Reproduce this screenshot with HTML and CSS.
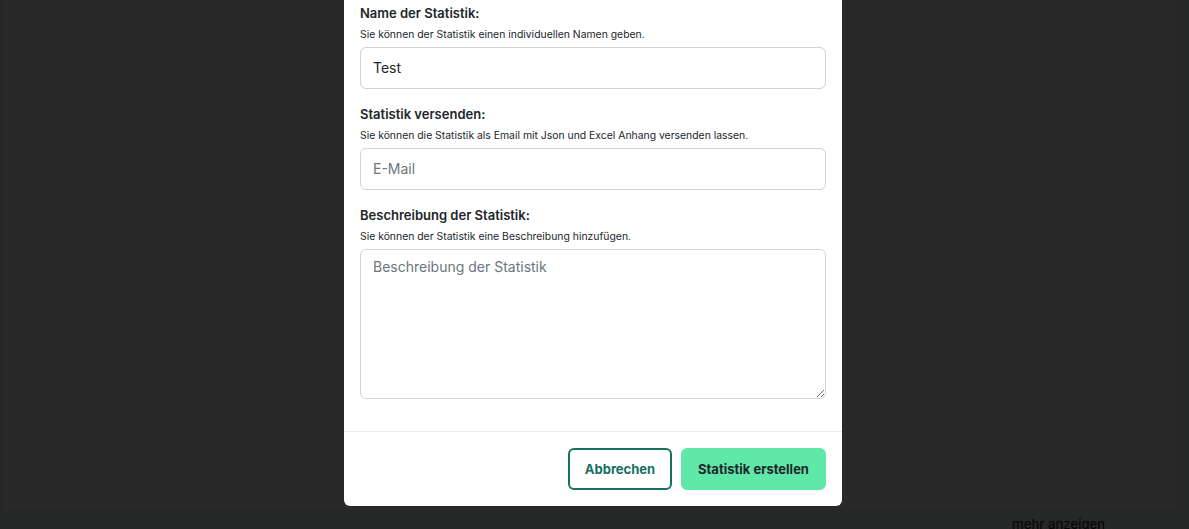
FILE: index.html
```html
<!DOCTYPE html>
<html lang="de">
<head>
<meta charset="utf-8">
<title>Statistik erstellen</title>
<link rel="stylesheet" href="styles.css">
</head>
<body>
<div class="page">
  <div class="card"></div>
  <div class="more">mehr anzeigen</div>
</div>
<div class="overlay">
  <div class="modal">
    <div class="modal-body">
      <div class="group">
        <label class="label" for="name">Name der Statistik:</label>
        <p class="help">Sie können der Statistik einen individuellen Namen geben.</p>
        <input id="name" class="input" type="text" value="Test">
      </div>
      <div class="group">
        <label class="label" for="mail">Statistik versenden:</label>
        <p class="help">Sie können die Statistik als Email mit Json und Excel Anhang versenden lassen.</p>
        <input id="mail" class="input" type="text" placeholder="E-Mail">
      </div>
      <div class="group">
        <label class="label" for="desc">Beschreibung der Statistik:</label>
        <p class="help">Sie können der Statistik eine Beschreibung hinzufügen.</p>
        <textarea id="desc" class="input textarea" placeholder="Beschreibung der Statistik"></textarea>
      </div>
    </div>
    <div class="modal-footer">
      <button class="btn btn-outline">Abbrechen</button>
      <button class="btn btn-primary">Statistik erstellen</button>
    </div>
  </div>
</div>
</body>
</html>
```
FILE: styles.css
```css
* { box-sizing: border-box; }
html, body { margin: 0; height: 100%; overflow: hidden; }
body {
  background: #eceef0;
  font-family: Inter, "Noto Sans", sans-serif;
  color: #212529;
}
.page { padding: 0 12px 0 3px; }
.card {
  height: 510px;
  background: #ffffff;
  border-radius: 0 0 6px 6px;
}
.more {
  margin: 6px 0 0 1009px;
  font-size: 13.3px;
  color: #222;
}
.overlay {
  position: fixed;
  inset: 0;
  background: rgba(0, 0, 0, 0.84);
  display: flex;
  justify-content: center;
  padding-right: 3px;
}
.modal {
  width: 498px;
  margin-top: -12px;
  align-self: flex-start;
  background: #fff;
  border-radius: 6px;
}
.modal-body { padding: 16px 16px 16px; }
.group { margin-bottom: 16px; display: flex; flex-direction: column; }
.label {
  font-size: 13px;
  font-weight: 600;
  line-height: 18px;
  margin-bottom: 6px;
  color: #212529;
}
.help {
  margin: 0 0 5px;
  font-size: 10.4px;
  line-height: 14px;
  color: #212529;
}
.input {
  height: 42px;
  width: 100%;
  border: 1px solid #ced4da;
  border-radius: 6px;
  padding: 0 12px 1px;
  font-family: Inter, "Noto Sans", sans-serif;
  font-size: 14px;
  color: #212529;
  background: #fff;
  outline: none;
}
.input::placeholder { color: #6c757d; }
.textarea {
  height: 150px;
  padding: 7px 12px;
  resize: vertical;
  line-height: 20px;
}
.modal-footer {
  border-top: 1px solid #e9ecef;
  padding: 16px;
  display: flex;
  justify-content: flex-end;
  gap: 9px;
}
.btn {
  height: 42px;
  border-radius: 6px;
  font-family: Inter, "Noto Sans", sans-serif;
  font-size: 13px;
  font-weight: 700;
  cursor: pointer;
}
.btn-outline {
  width: 104px;
  background: #fff;
  border: 2px solid #17705f;
  color: #17705f;
}
.btn-primary {
  width: 145px;
  background: #60e8a9;
  border: 1px solid #60e8a9;
  color: #212529;
}
```
